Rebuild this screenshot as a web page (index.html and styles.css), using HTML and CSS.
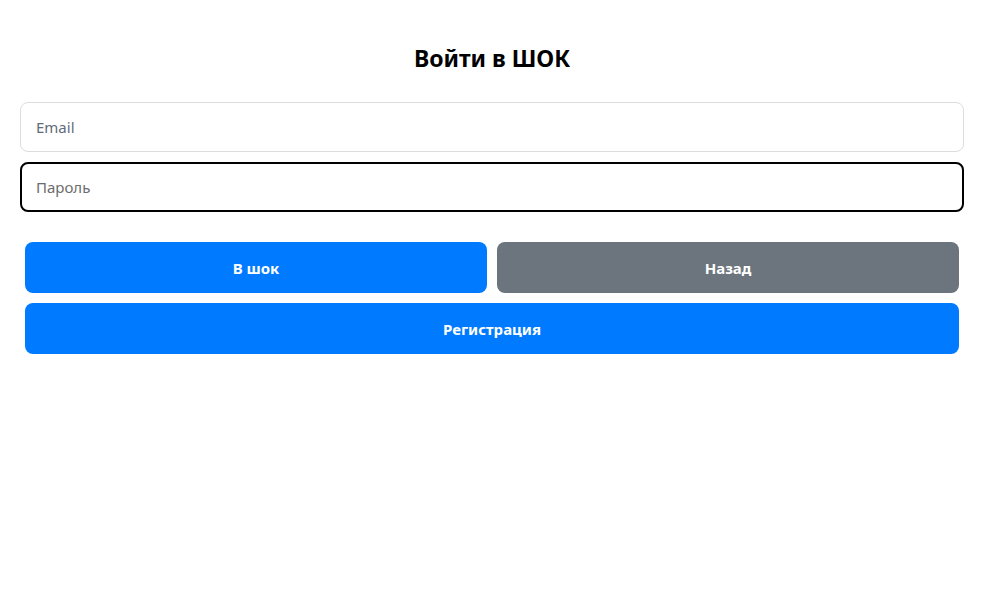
FILE: index.html
```html
<!DOCTYPE html>
<html lang="ru">
<head>
<meta charset="utf-8">
<title>Войти в ШОК</title>
<link rel="stylesheet" href="styles.css">
</head>
<body>
<main class="page">
  <h2 class="title">Войти в ШОК</h2>
  <form class="form">
    <input class="field" type="email" placeholder="Email">
    <input class="field field-focus" type="password" placeholder="Пароль">
    <div class="actions">
      <div class="row">
        <button type="button" class="btn btn-primary">В шок</button>
        <button type="button" class="btn btn-secondary">Назад</button>
      </div>
      <div class="row">
        <button type="button" class="btn btn-primary">Регистрация</button>
      </div>
    </div>
  </form>
</main>
</body>
</html>
```
FILE: styles.css
```css
html, body {
  margin: 0;
  padding: 0;
  background: #fff;
}
body {
  font-family: "Noto Sans", "Open Sans", sans-serif;
  color: #000;
}
.page {
  padding: 0 20px;
}
.title {
  margin: 0;
  padding-top: 43px;
  height: 30px;
  line-height: 30px;
  font-size: 23px;
  font-weight: 700;
  text-align: center;
  margin-bottom: 29px;
}
.form {
  display: flex;
  flex-direction: column;
  gap: 10px;
}
.field {
  box-sizing: border-box;
  width: 100%;
  height: 50px;
  padding: 0 15px;
  border: 1px solid #dddddd;
  border-radius: 8px;
  font-family: inherit;
  font-size: 15px;
  color: #333;
  outline: none;
  background: #fff;
}
.field::placeholder {
  color: #5f6b7a;
}
.field-focus {
  border: 2px solid #000;
  padding: 0 14px;
}
.field-focus::placeholder {
  color: #6c6c6c;
}
.actions {
  display: flex;
  flex-direction: column;
  gap: 10px;
  padding: 20px 5px 0;
}
.row {
  display: flex;
  gap: 10px;
}
.btn {
  flex: 1;
  height: 51px;
  border: none;
  border-radius: 8px;
  font-family: inherit;
  font-size: 15px;
  font-weight: 700;
  color: #fff;
  cursor: pointer;
}
.btn-primary {
  background: #007bff;
}
.btn-secondary {
  background: #6c757d;
}
```
